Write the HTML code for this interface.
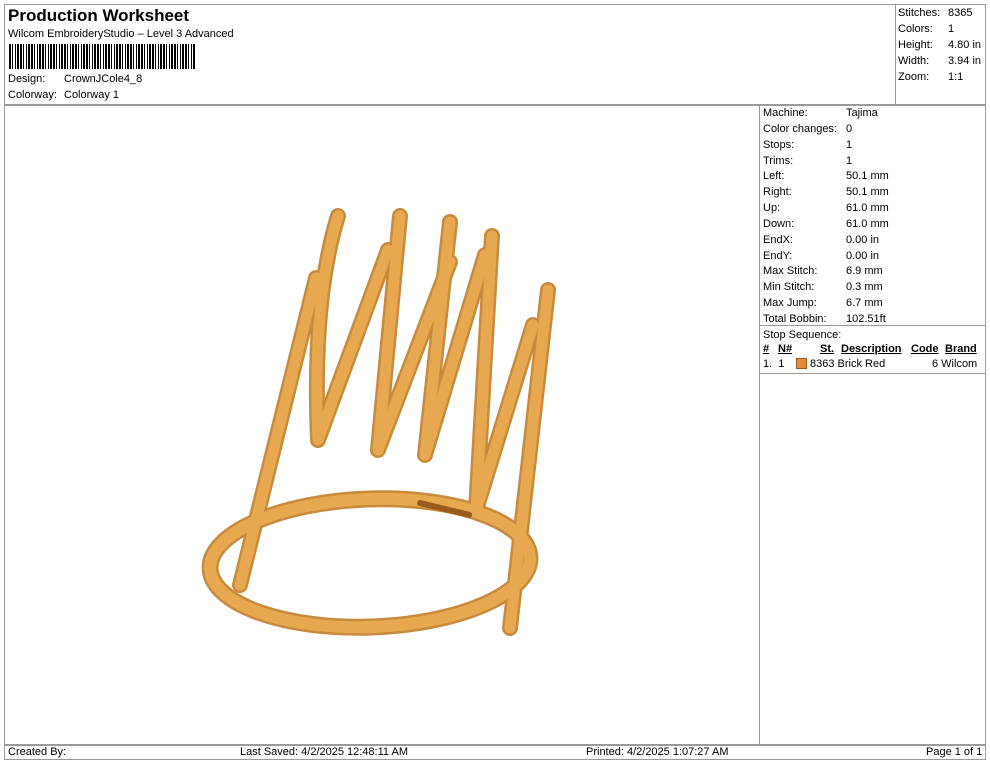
<!DOCTYPE html>
<html><head><meta charset="utf-8"><style>
body{margin:0;width:990px;height:762px;background:#fff;font-family:"Liberation Sans",Arial,sans-serif;color:#000;position:relative;overflow:hidden}
.a{position:absolute;white-space:nowrap}
.l{position:absolute;background:#9a9a9a}
.t{font-size:11px}
</style></head><body>
<div class="l" style="left:4px;top:4px;width:982px;height:1px"></div>
<div class="l" style="left:4px;top:4px;width:1px;height:756px"></div>
<div class="l" style="left:985px;top:4px;width:1px;height:756px"></div>
<div class="l" style="left:4px;top:104px;width:982px;height:2px"></div>
<div class="l" style="left:895px;top:4px;width:1px;height:100px"></div>
<div class="l" style="left:759px;top:104px;width:1px;height:640px"></div>
<div class="l" style="left:759px;top:325px;width:227px;height:1px"></div>
<div class="l" style="left:759px;top:373px;width:227px;height:1px"></div>
<div class="l" style="left:4px;top:744px;width:982px;height:2px"></div>
<div class="l" style="left:4px;top:759px;width:982px;height:1px"></div>

<div class="a" style="left:8px;top:6px;font-size:17px;font-weight:bold">Production Worksheet</div>
<div class="a t" style="left:8px;top:28px">Wilcom EmbroideryStudio – Level 3 Advanced</div>
<div class="a" style="left:9px;top:44px;width:186px;height:25px;background:repeating-linear-gradient(90deg,#000 0 2px,#fff 2px 3px,#000 3px 4px,#fff 4px 6px,#000 6px 7px,#fff 7px 8px,#000 8px 10px,#fff 10px 11px)"></div>
<div class="a t" style="left:8px;top:73px">Design:</div><div class="a t" style="left:64px;top:73px">CrownJCole4_8</div>
<div class="a t" style="left:8px;top:89px">Colorway:</div><div class="a t" style="left:64px;top:89px">Colorway 1</div>

<div class="a t" style="left:898px;top:5px;line-height:16px">Stitches:<br>Colors:<br>Height:<br>Width:<br>Zoom:</div>
<div class="a t" style="left:948px;top:5px;line-height:16px">8365<br>1<br>4.80 in<br>3.94 in<br>1:1</div>

<div class="a t" style="left:763px;top:106px;line-height:15.85px">Machine:<br>Color changes:<br>Stops:<br>Trims:<br>Left:<br>Right:<br>Up:<br>Down:<br>EndX:<br>EndY:<br>Max Stitch:<br>Min Stitch:<br>Max Jump:<br>Total Bobbin:<br>Stop Sequence:</div>
<div class="a t" style="left:846px;top:106px;line-height:15.85px">Tajima<br>0<br>1<br>1<br>50.1 mm<br>50.1 mm<br>61.0 mm<br>61.0 mm<br>0.00 in<br>0.00 in<br>6.9 mm<br>0.3 mm<br>6.7 mm<br>102.51ft</div>
<div class="a t" style="left:763px;top:343px;font-weight:bold;text-decoration:underline">#</div>
<div class="a t" style="left:778px;top:343px;font-weight:bold;text-decoration:underline">N#</div>
<div class="a t" style="left:820px;top:343px;font-weight:bold;text-decoration:underline">St.</div>
<div class="a t" style="left:841px;top:343px;font-weight:bold;text-decoration:underline">Description</div>
<div class="a t" style="left:911px;top:343px;font-weight:bold;text-decoration:underline">Code</div>
<div class="a t" style="left:945px;top:343px;font-weight:bold;text-decoration:underline">Brand</div>
<div class="a t" style="left:763px;top:358px">1.&nbsp; 1</div>
<div class="a" style="left:796px;top:358px;width:9px;height:9px;background:#e8883a;border:1px solid #a05a20"></div>
<div class="a t" style="left:810px;top:358px">8363 Brick Red</div>
<div class="a t" style="left:932px;top:358px">6 Wilcom</div>

<svg class="a" style="left:0;top:0" width="990" height="762">
<g fill="none" stroke-linecap="round" stroke-linejoin="round">
<g stroke="#c88a3c" stroke-width="16">
<path d="M240,585 L316,278 M338,216 Q312,300 318,440 L388,250 M400,216 L378,450 L450,262 M450,222 L425,455 L485,255 M492,236 L476,510 M548,290 L510,628 M533,325 L476,510"/>
<ellipse cx="370" cy="563" rx="160" ry="64" transform="rotate(-2 370 563)" stroke-width="17"/>
</g>
<g stroke="#e8a850" stroke-width="11">
<path d="M240,585 L316,278 M338,216 Q312,300 318,440 L388,250 M400,216 L378,450 L450,262 M450,222 L425,455 L485,255 M492,236 L476,510 M548,290 L510,628 M533,325 L476,510"/>
<ellipse cx="370" cy="563" rx="160" ry="64" transform="rotate(-2 370 563)" stroke-width="12"/>
</g>
<path d="M420,503 L470,515" stroke="#9a5a1c" stroke-width="6" stroke-dasharray="1.5 2"/>
</g>
</svg>

<div class="a" style="left:8px;top:746px;font-size:11px">Created By:</div>
<div class="a" style="left:240px;top:746px;font-size:11px">Last Saved: 4/2/2025 12:48:11 AM</div>
<div class="a" style="left:586px;top:746px;font-size:11px">Printed: 4/2/2025 1:07:27 AM</div>
<div class="a" style="left:926px;top:746px;font-size:11px">Page 1 of 1</div>
</body></html>
